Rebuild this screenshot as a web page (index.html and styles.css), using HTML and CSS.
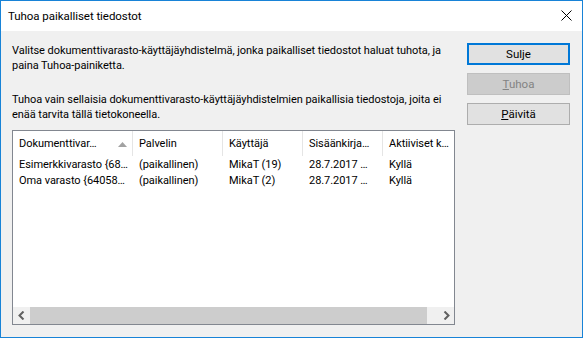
FILE: index.html
```html
<!DOCTYPE html>
<html>
<head>
    <meta charset="UTF-8">
    <title>Tuhoa paikalliset tiedostot</title>
    <link rel="stylesheet" href="styles.css">
</head>
<body>
    <div class="window">
        <div class="titlebar">
            <span class="title">Tuhoa paikalliset tiedostot</span>
            <svg class="close" width="11" height="11" viewBox="0 0 11 11">
                <path d="M0.5 0.5 L10.5 10.5 M10.5 0.5 L0.5 10.5" stroke="#000" stroke-width="1" fill="none"/>
            </svg>
        </div>

        <div class="content">
            <div class="main">
                <p class="intro">Valitse dokumenttivarasto-käyttäjäyhdistelmä, jonka paikalliset tiedostot haluat tuhota, ja<br>paina Tuhoa-painiketta.</p>
                <p class="note">Tuhoa vain sellaisia dokumenttivarasto-käyttäjäyhdistelmien paikallisia tiedostoja, joita ei<br>enää tarvita tällä tietokoneella.</p>

                <div class="listview">
                    <div class="header">
                        <div class="col c1">Dokumenttivar…
                            <svg class="sort" width="9" height="5" viewBox="0 0 9 5"><polygon points="0,5 4.5,0 9,5" fill="#a2a2a2"/></svg>
                        </div>
                        <div class="col c2">Palvelin</div>
                        <div class="col c3">Käyttäjä</div>
                        <div class="col c4">Sisäänkirja…</div>
                        <div class="col c5">Aktiiviset k…</div>
                    </div>
                    <div class="rows">
                        <div class="row">
                            <div class="col c1">Esimerkkivarasto {68…</div>
                            <div class="col c2">(paikallinen)</div>
                            <div class="col c3">MikaT (19)</div>
                            <div class="col c4">28.7.2017 …</div>
                            <div class="col c5">Kyllä</div>
                        </div>
                        <div class="row">
                            <div class="col c1">Oma varasto {64058…</div>
                            <div class="col c2">(paikallinen)</div>
                            <div class="col c3">MikaT (2)</div>
                            <div class="col c4">28.7.2017 …</div>
                            <div class="col c5">Kyllä</div>
                        </div>
                    </div>
                    <div class="hscroll">
                        <div class="arrow">
                            <svg width="8" height="9" viewBox="0 0 8 9"><path d="M5.5 0.5 L1.5 4.5 L5.5 8.5" stroke="#606060" stroke-width="2" fill="none"/></svg>
                        </div>
                        <div class="thumb"></div>
                        <div class="arrow">
                            <svg width="8" height="9" viewBox="0 0 8 9"><path d="M2.5 0.5 L6.5 4.5 L2.5 8.5" stroke="#606060" stroke-width="2" fill="none"/></svg>
                        </div>
                    </div>
                </div>
            </div>

            <div class="buttons">
                <button class="default">Sulje</button>
                <button disabled><u>T</u>uhoa</button>
                <button><u>P</u>äivitä</button>
            </div>
        </div>
    </div>
</body>
</html>
```

FILE: styles.css
```css
html, body {
    margin: 0;
    padding: 0;
    background: #f0f0f0;
}
body {
    font-family: Roboto, "Noto Sans", sans-serif;
    font-size: 11px;
    letter-spacing: -0.05px;
    color: #000;
}
.window {
    width: 583px;
    height: 338px;
    box-sizing: border-box;
    border: 1px solid #1883d7;
    background: #f0f0f0;
    display: flex;
    flex-direction: column;
    overflow: hidden;
}
.titlebar {
    flex-shrink: 0;
    height: 30px;
    background: #fff;
    display: flex;
    align-items: center;
    justify-content: space-between;
    padding: 0 10px 0 7px;
}
.title {
    font-size: 11.5px;
    margin-top: -1px;
}
.close {
    display: block;
    margin-top: -1px;
}
.content {
    flex: 1;
    display: flex;
    gap: 12px;
    padding: 12px 12px 12px 11px;
}
.main {
    width: 443px;
    flex-shrink: 0;
    display: flex;
    flex-direction: column;
}
.main p {
    margin: 0;
    line-height: 15px;
    white-space: nowrap;
}
.note {
    margin-top: 19px !important;
}
.listview {
    margin-top: 8px;
    height: 195px;
    box-sizing: border-box;
    border: 1px solid #828790;
    background: #fff;
    display: flex;
    flex-direction: column;
}
.header, .row {
    display: flex;
    white-space: nowrap;
}
.header {
    height: 25px;
    flex-shrink: 0;
}
.header .col {
    display: flex;
    align-items: center;
    border-right: 1px solid #e5e5e5;
}
.col {
    box-sizing: border-box;
    padding-left: 6px;
    overflow: hidden;
}
.c1 { width: 120px; }
.c2 { width: 90px; }
.c3 { width: 80px; }
.c4 { width: 80px; }
.c5 { width: 71px; }
.header .c5 { border-right: none; }
.header .c1 { position: relative; }
.sort {
    position: absolute;
    left: 105px;
    top: 11px;
}
.rows {
    flex: 1;
    padding-top: 1px;
}
.row {
    height: 16px;
    line-height: 16px;
}
.hscroll {
    flex-shrink: 0;
    height: 17px;
    background: #f0f0f0;
    display: flex;
}
.arrow {
    width: 17px;
    display: flex;
    align-items: center;
    justify-content: center;
}
.thumb {
    flex: 1;
    margin-right: 10px;
    background: #cdcdcd;
}
.buttons {
    display: flex;
    flex-direction: column;
    gap: 8px;
}
button {
    width: 103px;
    height: 22px;
    box-sizing: border-box;
    font-family: inherit;
    font-size: 11.5px;
    letter-spacing: 0;
    color: #000;
    background: #e1e1e1;
    border: 1px solid #adadad;
    border-radius: 0;
    padding: 0;
    margin: 0;
}
button.default {
    border: 2px solid #0078d7;
}
button:disabled {
    background: #cccccc;
    border-color: #bfbfbf;
    color: #838383;
}
```
